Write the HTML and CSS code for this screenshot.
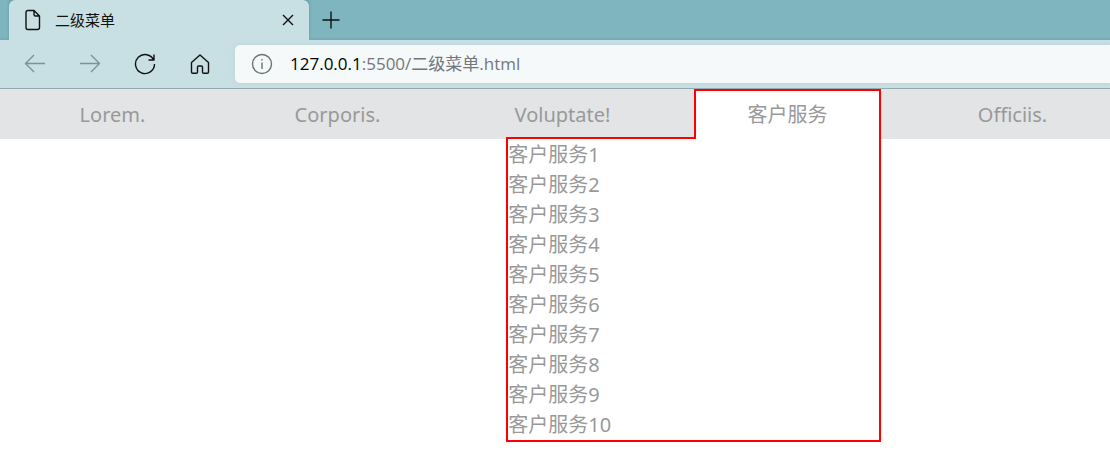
FILE: index.html
```html
<!DOCTYPE html>
<html lang="zh-CN">
<head>
<meta charset="utf-8">
<title>二级菜单</title>
<link rel="stylesheet" href="styles.css">
</head>
<body>
<header class="browser">
  <div class="tabs">
    <div class="tab">
      <svg class="icon" width="20" height="22" viewBox="0 0 20 22"><path d="M5 1.5h6l5.500 5.500v11.500a2 2 0 0 1-2 2h-9.500a2 2 0 0 1-2-2v-15a2 2 0 0 1 2-2zM11 1.500v4a1.500 1.500 0 0 0 1.500 1.500h4"/></svg>
      <span class="tab-title">二级菜单</span>
      <button class="tab-close" aria-label="关闭标签页"><svg class="icon" width="12" height="12" viewBox="0 0 12 12"><path d="M1 1l10 10M11 1L1 11"/></svg></button>
    </div>
    <button class="new-tab" aria-label="新建标签页"><svg class="icon" width="18" height="18" viewBox="0 0 18 18"><path d="M9 .5v17M.5 9h17"/></svg></button>
  </div>
  <div class="toolbar">
    <button class="tool muted" aria-label="后退"><svg class="icon" width="22" height="22" viewBox="0 0 22 22"><path d="M21 10.500H1.500M10 2L1.500 10.500L10 19"/></svg></button>
    <button class="tool muted" aria-label="前进"><svg class="icon" width="22" height="22" viewBox="0 0 22 22"><path d="M1 10.500h19.500M12 2l8.500 8.500L12 19"/></svg></button>
    <button class="tool" aria-label="刷新"><svg class="icon" width="22" height="22" viewBox="0 0 22 22"><path d="M19.800 7.500A9.500 9.500 0 1 0 20.500 11M20 1.500v5.500h-5.500"/></svg></button>
    <button class="tool" aria-label="主页"><svg class="icon" width="22" height="22" viewBox="0 0 22 22"><path d="M2.500 9.500L11 2l8.500 7.500v9.500a1.300 1.300 0 0 1-1.300 1.300h-3.400a1.300 1.300 0 0 1-1.300-1.300v-5a1 1 0 0 0-1-1h-3a1 1 0 0 0-1 1v5a1.300 1.300 0 0 1-1.300 1.300h-3.400a1.300 1.300 0 0 1-1.300-1.300z"/></svg></button>
    <div class="address">
      <svg class="icon info" width="22" height="22" viewBox="0 0 22 22"><circle cx="11" cy="11" r="9.500"/><path d="M11 9.500v6.500M11 6v1.500"/></svg>
      <span class="url"><span class="host">127.0.0.1</span>:5500/二级菜单.html</span>
    </div>
  </div>
</header>
<nav class="menu-bar">
  <ul class="menu">
    <li class="item"><a class="label" href="#">Lorem.</a></li>
    <li class="item"><a class="label" href="#">Corporis.</a></li>
    <li class="item"><a class="label" href="#">Voluptate!</a></li>
    <li class="item">
      <a class="label open" href="#">客户服务</a>
      <ul class="submenu">
        <li><a href="#">客户服务1</a></li>
        <li><a href="#">客户服务2</a></li>
        <li><a href="#">客户服务3</a></li>
        <li><a href="#">客户服务4</a></li>
        <li><a href="#">客户服务5</a></li>
        <li><a href="#">客户服务6</a></li>
        <li><a href="#">客户服务7</a></li>
        <li><a href="#">客户服务8</a></li>
        <li><a href="#">客户服务9</a></li>
        <li><a href="#">客户服务10</a></li>
      </ul>
    </li>
    <li class="item"><a class="label" href="#">Officiis.</a></li>
  </ul>
</nav>
</body>
</html>
```
FILE: styles.css
```css
* {
  box-sizing: border-box;
}

body {
  min-height: 100vh;
  margin: 0;
  overflow-x: hidden;
  background: #fff;
  font-family: "Noto Sans", "Noto Sans CJK SC", sans-serif;
}

ul {
  margin: 0;
  padding: 0;
  list-style: none;
}

a {
  color: inherit;
  text-decoration: none;
}

button {
  display: grid;
  place-items: center;
  padding: 0;
  border: 0;
  background: none;
  color: inherit;
}

.icon {
  display: block;
  flex: none;
  fill: none;
  stroke: currentColor;
  stroke-width: 1.4;
  stroke-linejoin: round;
}

.browser {
  border-bottom: 1px solid #94aab0;
  background: #c8dfe3;
  color: #111;
}

.tabs {
  display: flex;
  height: 40px;
  padding-left: 9px;
  background: linear-gradient(#7eb5be 37px, #72a9b2);
}

.tab {
  display: flex;
  align-items: center;
  width: 300px;
  padding: 0 14px;
  border-radius: 6px 6px 0 0;
  background: #c8dfe3;
  box-shadow: 0 -2px 3px #5f98a2;
}

.tab-title {
  flex: 1;
  padding-left: 12px;
  font-size: 15px;
  line-height: 20px;
}

.tab-close {
  width: 14px;
  height: 20px;
}

.new-tab {
  width: 44px;
}

.toolbar {
  position: relative;
  display: flex;
  align-items: center;
  height: 48px;
  padding-left: 24px;
  gap: 33px;
  background: #c8dfe3;
}

.tool {
  width: 22px;
  height: 22px;
}

.muted {
  color: #7e9196;
}

.address {
  display: flex;
  flex: 1;
  align-items: center;
  gap: 17px;
  height: 38px;
  margin-left: -9px;
  padding-left: 16px;
  border-radius: 5px 0 0 5px;
  background: #f5f9fa;
  box-shadow: 0 0 4px #b9d0d5;
}

.info {
  color: #6d7375;
}

.url {
  color: #73777a;
  font-family: "Open Sans", "Noto Sans CJK SC", sans-serif;
  font-size: 17px;
  line-height: 24px;
}

.host {
  color: #000;
}

.menu-bar {
  margin-right: -15px;
  background: #e2e4e5;
}

.menu {
  display: flex;
  justify-content: space-around;
  color: #999;
  font-size: 20px;
}

.item {
  position: relative;
  width: calc(100% / 6);
}

.label {
  display: block;
  height: 50px;
  line-height: 52px;
  text-align: center;
}

.open {
  position: relative;
  z-index: 2;
  border: 2px solid #f00;
  border-bottom: 0;
  background: #fff;
  line-height: 48px;
}

.submenu {
  position: absolute;
  z-index: 1;
  top: 48px;
  right: 0;
  width: 200%;
  padding-top: 1px;
  border: 2px solid #f00;
  background: #fff;
  line-height: 30px;
}
```
